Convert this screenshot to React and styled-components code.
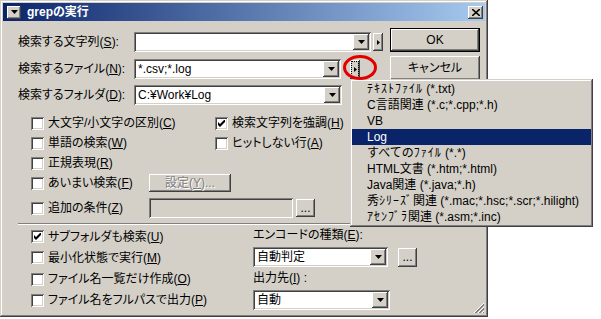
import styled, { createGlobalStyle } from "styled-components";

const GlobalStyle = createGlobalStyle`
  html, body { margin: 0; padding: 0; background: #fff; }
  body {
    font-family: "Liberation Sans", "Noto Sans CJK JP", sans-serif;
    font-size: 12px;
    line-height: 14px;
    font-feature-settings: "palt";
    color: #000;
  }
  *, *::before, *::after { box-sizing: border-box; }
  u { text-underline-offset: 1px; }
`;

const raised = `
  background: #d4d0c8;
  box-shadow: inset -1px -1px #404040, inset 1px 1px #fff,
    inset -2px -2px #808080, inset 2px 2px #d4d0c8;
`;

const sunken = `
  box-shadow: inset 1px 1px #808080, inset -1px -1px #fff,
    inset 2px 2px #404040, inset -2px -2px #d4d0c8;
`;

const Page = styled.div`
  position: relative;
  width: 601px;
  height: 319px;
`;

const Window = styled.div`
  position: relative;
  width: 488px;
  height: 317px;
  padding: 3px;
  background: #d4d0c8;
  box-shadow: inset -1px -1px #404040, inset 1px 1px #d4d0c8,
    inset -2px -2px #808080, inset 2px 2px #fff;
`;

const TitleBar = styled.div`
  height: 18px;
  display: flex;
  align-items: center;
  padding: 0 2px 0 4px;
  background: linear-gradient(to right, #0a246a, #a6caf0);
`;

const SysButton = styled.div`
  width: 14px;
  height: 13px;
  ${raised}
  display: flex;
  align-items: center;
  justify-content: center;
`;

const Title = styled.div`
  flex: 1;
  margin-left: 6px;
  color: #fff;
  font-weight: bold;
`;

const CloseButton = styled.div`
  width: 15px;
  height: 13px;
  ${raised}
  display: flex;
  align-items: center;
  justify-content: center;
`;

const Body = styled.div`
  padding-left: 15px;
  display: flex;
  flex-direction: column;
`;

const TopArea = styled.div`
  display: flex;
  margin-top: 7px;
`;

const Fields = styled.div`
  width: 372px;
  padding-top: 4px;
  display: flex;
  flex-direction: column;
`;

const FieldRow = styled.div`
  display: flex;
  align-items: center;
  height: 20px;
  margin-top: ${(p) => p.$mt || 0}px;
`;

const Label = styled.div`
  width: 116px;
  white-space: nowrap;
`;

const Combo = styled.div`
  width: ${(p) => p.$w}px;
  height: ${(p) => p.$h || 20}px;
  padding: 2px;
  background: #fff;
  ${sunken}
  display: flex;
  align-items: stretch;
`;

const ComboText = styled.div`
  flex: 1;
  padding-left: 2px;
  display: flex;
  align-items: center;
  white-space: nowrap;
  overflow: hidden;
`;

const DropButton = styled.div`
  width: 16px;
  ${raised}
  display: flex;
  align-items: center;
  justify-content: center;
`;

const ArrowButton = styled.div`
  position: relative;
  width: 10px;
  height: ${(p) => p.$h || 18}px;
  margin-left: ${(p) => p.$ml}px;
  ${raised}
  display: flex;
  align-items: center;
  justify-content: center;

  ${(p) =>
    p.$focus &&
    `&::after {
      content: "";
      position: absolute;
      inset: 1px;
      border: 1px dotted #000;
    }`}
`;

const ButtonCol = styled.div`
  display: flex;
  flex-direction: column;
  gap: 4px;
`;

const Button = styled.div`
  width: ${(p) => p.$w}px;
  height: ${(p) => p.$h}px;
  margin-left: ${(p) => p.$ml || 0}px;
  ${raised}
  display: flex;
  align-items: center;
  justify-content: center;
  white-space: nowrap;
  flex: none;
  ${(p) => p.$default && "border: 1px solid #000;"}
  ${(p) => p.$disabled && "color: #808080; text-shadow: 1px 1px 0 #fff;"}
`;

const Options = styled.div`
  margin-top: 8px;
  padding-left: 13px;
  display: flex;
  flex-direction: column;
`;

const OptRow = styled.div`
  display: flex;
  align-items: center;
  height: 20px;
  margin-top: ${(p) => p.$mt || 0}px;
`;

const Check = styled.div`
  display: flex;
  align-items: center;
  gap: 4px;
  width: ${(p) => (p.$w ? `${p.$w}px` : "auto")};
  height: ${(p) => (p.$h ? `${p.$h}px` : "auto")};
  white-space: nowrap;
  flex: none;
`;

const Box = styled.span`
  width: 13px;
  height: 13px;
  background: #fff;
  ${sunken}
  display: flex;
  align-items: center;
  justify-content: center;
  flex: none;
`;

const DisabledEdit = styled.div`
  width: 144px;
  height: 20px;
  background: #d4d0c8;
  ${sunken}
`;

const Separator = styled.div`
  width: 452px;
  height: 2px;
  margin-top: 5px;
  border-top: 1px solid #808080;
  border-bottom: 1px solid #fff;
`;

const BottomArea = styled.div`
  display: flex;
`;

const BottomLeft = styled.div`
  width: 235px;
  padding: 1px 0 0 13px;
  display: flex;
  flex-direction: column;
`;

const BottomRight = styled.div`
  display: flex;
  flex-direction: column;
`;

const SmallLabel = styled.div`
  height: 14px;
  margin-top: ${(p) => p.$mt}px;
  white-space: nowrap;
`;

const InlineRow = styled.div`
  display: flex;
  align-items: center;
  margin-top: ${(p) => p.$mt}px;
`;

const Grip = styled.svg`
  position: absolute;
  right: 3px;
  bottom: 3px;
`;

const Menu = styled.div`
  position: absolute;
  left: 350px;
  top: 79px;
  width: 243px;
  padding: 2px;
  background: #d4d0c8;
  font-feature-settings: normal;
  box-shadow: inset -1px -1px #404040, inset 1px 1px #d4d0c8,
    inset -2px -2px #808080, inset 2px 2px #fff;
`;

const MenuItem = styled.div`
  height: 16px;
  line-height: 16px;
  padding-left: 15px;
  white-space: nowrap;
  ${(p) => p.$active && "background: #0a246a; color: #fff;"}
`;

const HalfKana = styled.span`
  letter-spacing: 1px;
`;

const Mark = styled.svg`
  position: absolute;
  left: 342px;
  top: 54px;
`;

const Down = () => (
  <svg width="7" height="4" viewBox="0 0 7 4">
    <polygon points="0,0 7,0 3.5,4" fill="#000" />
  </svg>
);

const Right = () => (
  <svg width="3" height="5" viewBox="0 0 3 5">
    <polygon points="0,0 3,2.5 0,5" fill="#000" />
  </svg>
);

const Tick = () => (
  <svg width="7" height="7" viewBox="0 0 7 7">
    <path d="M0 2 L2 4 L6 0 L7 0 L7 2 L2 7 L0 5 Z" fill="#000" />
  </svg>
);

const CheckItem = ({ checked, w, h, children }) => (
  <Check $w={w} $h={h}>
    <Box>{checked && <Tick />}</Box>
    <span>{children}</span>
  </Check>
);

const DropDown = ({ w, h, text }) => (
  <Combo $w={w} $h={h}>
    <ComboText>{text}</ComboText>
    <DropButton>
      <Down />
    </DropButton>
  </Combo>
);

// half-width katakana get a bit of extra spacing, as in the old bitmap font
const MenuText = ({ text }) =>
  text.split(/([\uFF61-\uFF9F]+)/).map((part, i) =>
    /[\uFF61-\uFF9F]/.test(part) ? <HalfKana key={i}>{part}</HalfKana> : part
  );

const menuItems = [
  "ﾃｷｽﾄﾌｧｲﾙ (*.txt)",
  "C言語関連 (*.c;*.cpp;*.h)",
  "VB",
  "Log",
  "すべてのﾌｧｲﾙ (*.*)",
  "HTML文書 (*.htm;*.html)",
  "Java関連 (*.java;*.h)",
  "秀ｼﾘｰｽﾞ関連 (*.mac;*.hsc;*.scr;*.hilight)",
  "ｱｾﾝﾌﾞﾗ関連 (*.asm;*.inc)",
];

const App = () => {
  return (
    <Page>
      <GlobalStyle />
      <Window>
        <TitleBar>
          <SysButton>
            <Down />
          </SysButton>
          <Title>grepの実行</Title>
          <CloseButton>
            <svg width="8" height="7" viewBox="0 0 8 7">
              <path d="M0 0 L8 7 M8 0 L0 7" stroke="#000" strokeWidth="1.6" />
            </svg>
          </CloseButton>
        </TitleBar>

        <Body>
          <TopArea>
            <Fields>
              <FieldRow>
                <Label>
                  検索する文字列(<u>S</u>):
                </Label>
                <DropDown w={237} text="" />
                <ArrowButton $ml={2}>
                  <Right />
                </ArrowButton>
              </FieldRow>
              <FieldRow $mt={7}>
                <Label>
                  検索するファイル(<u>N</u>):
                </Label>
                <DropDown w={207} text="*.csv;*.log" />
                <ArrowButton $ml={9} $h={19} $focus>
                  <Right />
                </ArrowButton>
              </FieldRow>
              <FieldRow $mt={6}>
                <Label>
                  検索するフォルダ(<u>D</u>):
                </Label>
                <DropDown w={208} text="C:¥Work¥Log" />
              </FieldRow>
            </Fields>
            <ButtonCol>
              <Button $w={90} $h={24} $default>
                OK
              </Button>
              <Button $w={90} $h={24}>
                キャンセル
              </Button>
            </ButtonCol>
          </TopArea>

          <Options>
            <OptRow>
              <CheckItem w={184}>
                大文字/小文字の区別(<u>C</u>)
              </CheckItem>
              <CheckItem checked>
                検索文字列を強調(<u>H</u>)
              </CheckItem>
            </OptRow>
            <OptRow>
              <CheckItem w={184}>
                単語の検索(<u>W</u>)
              </CheckItem>
              <CheckItem>
                ヒットしない行(<u>A</u>)
              </CheckItem>
            </OptRow>
            <OptRow>
              <CheckItem>
                正規表現(<u>R</u>)
              </CheckItem>
            </OptRow>
            <OptRow>
              <CheckItem w={118}>
                あいまい検索(<u>F</u>)
              </CheckItem>
              <Button $w={82} $h={18} $disabled>
                設定(<u>Y</u>)...
              </Button>
            </OptRow>
            <OptRow $mt={5}>
              <CheckItem w={118}>
                追加の条件(<u>Z</u>)
              </CheckItem>
              <DisabledEdit />
              <Button $w={19} $h={18} $ml={3}>
                ...
              </Button>
            </OptRow>
          </Options>

          <Separator />

          <BottomArea>
            <BottomLeft>
              <CheckItem checked h={21}>
                サブフォルダも検索(<u>U</u>)
              </CheckItem>
              <CheckItem h={21}>
                最小化状態で実行(<u>M</u>)
              </CheckItem>
              <CheckItem h={22}>
                ファイル名一覧だけ作成(<u>O</u>)
              </CheckItem>
              <CheckItem h={20}>
                ファイル名をフルパスで出力(<u>P</u>)
              </CheckItem>
            </BottomLeft>
            <BottomRight>
              <SmallLabel $mt={3}>
                エンコードの種類(<u>E</u>):
              </SmallLabel>
              <InlineRow $mt={5}>
                <DropDown w={135} h={20} text="自動判定" />
                <Button $w={19} $h={19} $ml={10}>
                  ...
                </Button>
              </InlineRow>
              <SmallLabel $mt={4}>
                出力先(<u>I</u>) :
              </SmallLabel>
              <InlineRow $mt={5}>
                <DropDown w={137} h={20} text="自動" />
              </InlineRow>
            </BottomRight>
          </BottomArea>
        </Body>

        <Grip width="12" height="12" viewBox="0 0 12 12">
          <path d="M11 1 L1 11 M11 5 L5 11 M11 9 L9 11" stroke="#fff" strokeWidth="1" />
          <path d="M11 2 L2 11 M11 3 L3 11 M11 6 L6 11 M11 7 L7 11 M11 10 L10 11" stroke="#808080" strokeWidth="1" />
        </Grip>
      </Window>

      <Menu>
        {menuItems.map((item) => (
          <MenuItem key={item} $active={item === "Log"}>
            <MenuText text={item} />
          </MenuItem>
        ))}
      </Menu>

      <Mark width="36" height="28" viewBox="0 0 36 28">
        <ellipse cx="18" cy="13.5" rx="15.5" ry="11" fill="none" stroke="#e00000" strokeWidth="3" />
      </Mark>
    </Page>
  );
};

export default App;
